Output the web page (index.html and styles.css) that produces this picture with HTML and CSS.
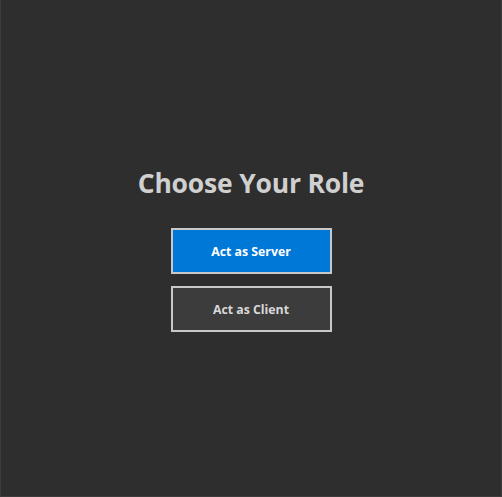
FILE: index.html
```html
<!DOCTYPE html>
<html>
<head>
<meta charset="utf-8">
<link rel="stylesheet" href="styles.css">
</head>
<body>
<main class="screen">
  <h1 class="title">Choose Your Role</h1>
  <div class="actions">
    <button class="btn btn-primary">Act as Server</button>
    <button class="btn btn-secondary">Act as Client</button>
  </div>
</main>
</body>
</html>
```
FILE: styles.css
```css
html, body {
  margin: 0;
  padding: 0;
  height: 100%;
  background: #2e2e2e;
}
.screen {
  box-sizing: border-box;
  height: 497px;
  border-left: 1px solid #3c3c3c;
  border-right: 1px solid #3c3c3c;
  border-bottom: 1px solid #3c3c3c;
  display: flex;
  flex-direction: column;
  align-items: center;
  justify-content: center;
  padding-top: 3px;
  font-family: "Open Sans", "Noto Sans", sans-serif;
}
.title {
  margin: 0 0 29px 0;
  font-size: 26.5px;
  font-weight: 700;
  color: #d0d0d0;
  line-height: 32px;
  letter-spacing: -0.2px;
}
.actions {
  display: flex;
  flex-direction: column;
  gap: 12px;
}
.btn {
  box-sizing: border-box;
  width: 161px;
  height: 46px;
  border: 2px solid #c8c8c8;
  font-family: "Open Sans", "Noto Sans", sans-serif;
  font-size: 12.3px;
  font-weight: 700;
  padding: 0;
}
.btn-primary {
  background: #0078d7;
  color: #ffffff;
}
.btn-secondary {
  background: #3c3c3c;
  color: #d8d8d8;
}
```
